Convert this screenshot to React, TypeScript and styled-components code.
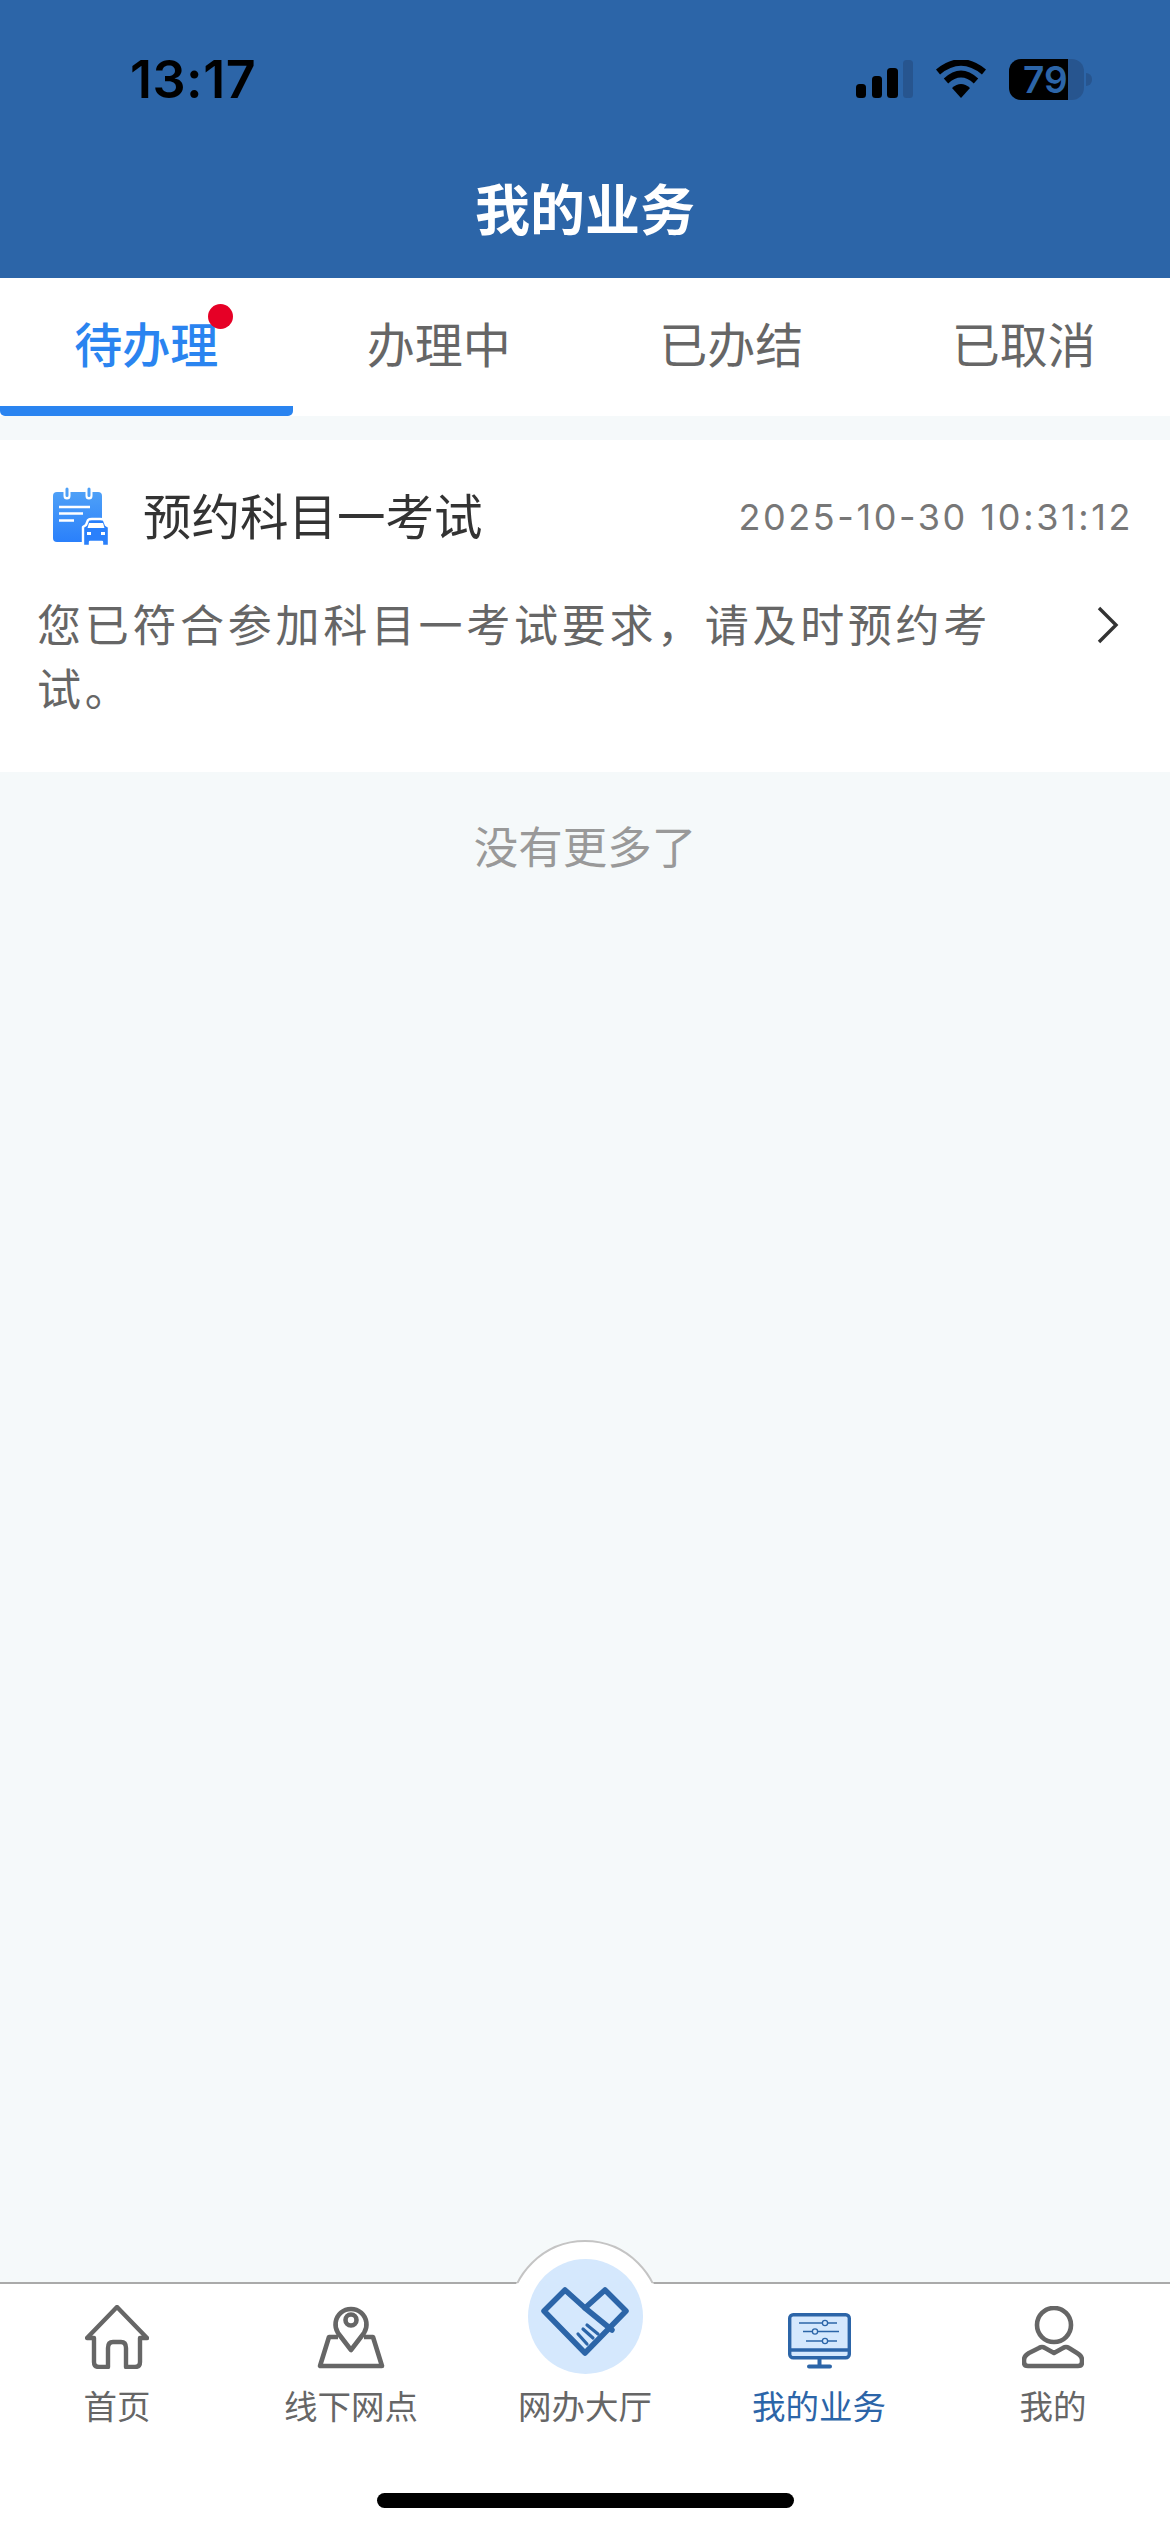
import React from 'react';
import styled, { createGlobalStyle } from 'styled-components';

const BLUE = '#2c65a8';
const CJK = '"Noto Sans CJK SC", "Noto Sans", sans-serif';

const GlobalStyle = createGlobalStyle`
	html, body {
		margin: 0;
		padding: 0;
		background: #f5f9fa;
		font-family: ${CJK};
	}
`;

const tabs = ['待办理', '办理中', '已办结', '已取消'];

const HomeIcon = () => (
	<svg width="64" height="64" viewBox="0 0 64 64" fill="none" stroke="#666" strokeWidth="4.4" strokeLinejoin="round">
		<path d="M32 2 L2 33 H9 V57 Q9 62 14 62 H23 V43 Q23 37 28 37 H36 Q41 37 41 43 V62 H50 Q55 62 55 57 V33 H62 Z" />
	</svg>
);

const PinIcon = () => (
	<svg width="68" height="66" viewBox="0 0 68 66" fill="none" stroke="#666" strokeWidth="4.6" strokeLinejoin="round">
		<path d="M21 34 H12 L3 63 H65 L56 34 H47" />
		<path d="M34 47 L21 30 A15.5 15.5 0 1 1 47 30 Z" />
		<circle cx="34" cy="17" r="5.5" />
	</svg>
);

const HandsIcon = () => (
	<svg width="90" height="80" viewBox="0 0 90 80" fill="none" stroke={BLUE} strokeWidth="5.5" strokeLinejoin="round" strokeLinecap="round">
		<path d="M4 35 L25 14 L45 32 L65 14 L86 35 L45 77 Z" />
		<path d="M45 32 L72 54" />
		<path d="M38 58 L47 68 M43 53 L53 62 M47 49 L58 58" strokeWidth="3.2" />
	</svg>
);

const MonitorIcon = () => (
	<svg width="63" height="56" viewBox="0 0 63 56">
		<rect x="1.7" y="1.7" width="59.6" height="43" rx="3.5" fill="#d5e8fd" stroke={BLUE} strokeWidth="3.4" />
		<path d="M2 37 H61" stroke={BLUE} strokeWidth="3.4" />
		<path d="M31.5 45 V53" stroke={BLUE} strokeWidth="4" />
		<path d="M21 53.5 H42" stroke={BLUE} strokeWidth="4" strokeLinecap="round" />
		<g stroke={BLUE} strokeWidth="1.3" fill="#d5e8fd">
			<path d="M11 10 H49 M15 18.5 H51 M18 28 H49" />
			<circle cx="37" cy="10" r="2.6" />
			<circle cx="27" cy="18.5" r="2.6" />
			<circle cx="37" cy="28" r="2.6" />
		</g>
	</svg>
);

const PersonIcon = () => (
	<svg width="62" height="63" viewBox="0 0 62 63" fill="none" stroke="#666" strokeWidth="4.6" strokeLinejoin="round">
		<ellipse cx="32" cy="19" rx="17" ry="17" />
		<path d="M6 60 H56 Q60 60 60 56 V54 Q60 50 55 47 L47 42 Q44 40 41 42 L32 47 L23 42 Q20 40 17 42 L7 47 Q2 50 2 54 V56 Q2 60 6 60 Z" />
	</svg>
);

const ExamIcon = () => (
	<svg width="58" height="60" viewBox="0 0 58 60">
		<defs>
			<linearGradient id="examFill" x1="0" y1="0" x2="0" y2="1">
				<stop offset="0" stopColor="#4ea0f7" />
				<stop offset="1" stopColor="#2a80fb" />
			</linearGradient>
		</defs>
		<rect x="1" y="5" width="49" height="50" rx="4" fill="url(#examFill)" />
		<path d="M15 3 V9 M37 3 V9" stroke="#fff" strokeWidth="7" strokeLinecap="round" />
		<path d="M15 2 V8.5 M37 2 V8.5" stroke="#4ea0f7" strokeWidth="3" strokeLinecap="round" />
		<path d="M7 20 H38 M7 26.5 H31 M7 33.5 H22" stroke="#fff" strokeWidth="2.4" />
		<path
			d="M36 33 Q37 32 40 32 H48 Q51 32 52 33 L54 38 L57 40 V59 H50 V55 H38 V59 H31 V40 L34 38 Z"
			fill="#2a80fb"
			stroke="#fff"
			strokeWidth="2.4"
			strokeLinejoin="round"
		/>
		<path d="M37 36 H51 L52.5 41 H35.5 Z" fill="#fff" />
		<rect x="35" y="45" width="4" height="3" fill="#fff" />
		<rect x="49" y="45" width="4" height="3" fill="#fff" />
	</svg>
);

const navItems = [
	{ label: '首页', icon: <HomeIcon /> },
	{ label: '线下网点', icon: <PinIcon /> },
	{
		label: '网办大厅',
		icon: (
			<RaisedDisc>
				<RaisedCircle>
					<HandsIcon />
				</RaisedCircle>
			</RaisedDisc>
		),
	},
	{ label: '我的业务', icon: <MonitorIcon />, active: true },
	{ label: '我的', icon: <PersonIcon /> },
];

function RaisedDisc({ children }: { children: React.ReactNode }) {
	return <DiscShape>{children}</DiscShape>;
}

function RaisedCircle({ children }: { children: React.ReactNode }) {
	return <CircleShape>{children}</CircleShape>;
}

const App: React.FC = () => {
	return (
		<Page>
			<GlobalStyle />
			<Header>
				<StatusBar>
					<Clock>13:17</Clock>
					<StatusIcons>
						<svg width="57" height="38" viewBox="0 0 57 38">
							<rect x="0" y="24" width="10" height="14" rx="3.5" fill="#000" />
							<rect x="16" y="16" width="10" height="22" rx="3.5" fill="#000" />
							<rect x="31" y="8" width="11" height="30" rx="3.5" fill="#000" />
							<rect x="47" y="0" width="10" height="38" rx="3.5" fill="#27558f" />
						</svg>
						<svg width="50" height="38" viewBox="0 0 50 38">
							<path d="M25 38 L16 28 Q25 20 34 28 Z" fill="#000" />
							<path d="M10 21 Q25 7 40 21" fill="none" stroke="#000" strokeWidth="6.5" />
							<path d="M2 12 Q25 -7 48 12" fill="none" stroke="#000" strokeWidth="6.5" />
						</svg>
						<Battery>79</Battery>
					</StatusIcons>
				</StatusBar>
				<Title>我的业务</Title>
			</Header>
			<TabBar>
				{tabs.map((tab, i) => (
					<Tab key={tab} $active={i === 0}>
						<TabLabel>
							{tab}
							{i === 0 && <RedDot />}
						</TabLabel>
					</Tab>
				))}
			</TabBar>
			<Card>
				<CardHead>
					<CardTitleWrap>
						<ExamIcon />
						<CardTitle>预约科目一考试</CardTitle>
					</CardTitleWrap>
					<CardTime>2025-10-30 10:31:12</CardTime>
				</CardHead>
				<CardBody>
					<CardText>您已符合参加科目一考试要求，请及时预约考试。</CardText>
					<Chevron width="24" height="38" viewBox="0 0 24 38" fill="none" stroke="#333" strokeWidth="3.4">
						<path d="M3 2 L20 19 L3 36" />
					</Chevron>
				</CardBody>
			</Card>
			<NoMore>没有更多了</NoMore>
			<Spacer />
			<NavBar>
				<NavRow>
					{navItems.map((item) => (
						<NavItem key={item.label} $active={item.active}>
							<NavIcon>{item.icon}</NavIcon>
							<NavLabel>{item.label}</NavLabel>
						</NavItem>
					))}
				</NavRow>
				<HomeIndicator />
			</NavBar>
		</Page>
	);
};

const Page = styled.div`
	width: 1170px;
	height: 2532px;
	display: flex;
	flex-direction: column;
	background: #f5f9fa;
	overflow: hidden;
`;

const Header = styled.header`
	height: 278px;
	background: ${BLUE};
	display: flex;
	flex-direction: column;
	box-sizing: border-box;
	padding-top: 50px;
`;

const StatusBar = styled.div`
	height: 58px;
	display: flex;
	align-items: center;
	justify-content: space-between;
	padding: 0 86px 0 130px;
`;

const Clock = styled.div`
	font-family: Inter, 'Liberation Sans', sans-serif;
	font-size: 52px;
	font-weight: 600;
	letter-spacing: 0.5px;
	color: #000;
`;

const StatusIcons = styled.div`
	display: flex;
	align-items: center;
	gap: 23px;
`;

const Battery = styled.div`
	position: relative;
	width: 75px;
	height: 41px;
	border-radius: 12px;
	background: linear-gradient(90deg, #000 78.5%, #27558f 78.5%);
	color: ${BLUE};
	font-family: Inter, 'Liberation Sans', sans-serif;
	font-size: 37px;
	font-weight: 600;
	line-height: 41px;
	padding-left: 14px;
	box-sizing: border-box;

	&::after {
		content: '';
		position: absolute;
		right: -8px;
		top: 14px;
		width: 6px;
		height: 13px;
		border-radius: 0 6px 6px 0;
		background: #27558f;
	}
`;

const Title = styled.h1`
	margin: 63px 0 0;
	text-align: center;
	color: #fff;
	font-size: 55px;
	font-weight: 700;
	line-height: 70px;
`;

const TabBar = styled.nav`
	height: 138px;
	background: #fff;
	display: grid;
	grid-template-columns: repeat(4, 1fr);
`;

const Tab = styled.div<{ $active?: boolean }>`
	display: flex;
	justify-content: center;
	padding-top: 29px;
	box-sizing: border-box;
	font-size: 48px;
	line-height: 70px;
	font-weight: ${(props) => (props.$active ? 500 : 400)};
	color: ${(props) => (props.$active ? '#2a84f0' : '#666')};
	border-bottom: 10px solid ${(props) => (props.$active ? '#2a84f0' : 'transparent')};
	border-radius: ${(props) => (props.$active ? '0 0 5px 5px' : '0')};
`;

const TabLabel = styled.span`
	position: relative;
	height: 70px;
`;

const RedDot = styled.i`
	position: absolute;
	right: -15px;
	top: -3px;
	width: 25px;
	height: 25px;
	border-radius: 50%;
	background: #e60026;
`;

const Card = styled.section`
	margin-top: 24px;
	height: 332px;
	background: #fff;
	box-sizing: border-box;
	padding-top: 46px;
`;

const CardHead = styled.div`
	display: flex;
	align-items: center;
	justify-content: space-between;
	padding: 0 37px 0 52px;
	height: 62px;
`;

const CardTitleWrap = styled.div`
	display: flex;
	align-items: center;
	gap: 33px;
`;

const CardTitle = styled.div`
	font-size: 48.5px;
	color: #333;
	line-height: 58px;
	margin-top: -6px;
`;

const CardTime = styled.div`
	font-family: Inter, 'Liberation Sans', sans-serif;
	font-size: 36px;
	letter-spacing: 2.6px;
	color: #777;
`;

const CardBody = styled.div`
	display: flex;
	justify-content: space-between;
	padding: 43px 50px 0 37px;
`;

const CardText = styled.p`
	margin: 0;
	width: 985px;
	font-size: 44px;
	letter-spacing: 3.7px;
	line-height: 64px;
	color: #666;
`;

const Chevron = styled.svg`
	margin-top: 15px;
	flex-shrink: 0;
`;

const NoMore = styled.div`
	margin-top: 41px;
	text-align: center;
	font-size: 44.5px;
	line-height: 64px;
	color: #999;
`;

const Spacer = styled.div`
	flex: 1;
`;

const NavBar = styled.footer`
	position: relative;
	height: 250px;
	background: #fff;
	border-top: 2px solid #aaa;
	box-sizing: border-box;
`;

const NavRow = styled.div`
	display: grid;
	grid-template-columns: repeat(5, 234px);
`;

const NavItem = styled.div<{ $active?: boolean }>`
	position: relative;
	display: flex;
	flex-direction: column;
	align-items: center;
	padding-top: 19px;
	color: ${(props) => (props.$active ? BLUE : '#666')};
`;

const NavIcon = styled.div`
	height: 66px;
	display: flex;
	align-items: flex-end;
`;

const NavLabel = styled.div`
	margin-top: 12px;
	font-size: 33.5px;
	line-height: 48px;
`;

const DiscShape = styled.div`
	position: absolute;
	top: -44px;
	left: 41px;
	width: 152px;
	height: 152px;
	border-radius: 50%;
	background: #fff;
	display: flex;
	align-items: center;
	justify-content: center;

	&::before {
		content: '';
		position: absolute;
		inset: 0;
		box-sizing: border-box;
		border-radius: 50%;
		border: 2px solid #c4c4c4;
		clip-path: inset(0 0 71.5% 0);
	}
`;

const CircleShape = styled.div`
	width: 115px;
	height: 115px;
	border-radius: 50%;
	background: #d5e8fd;
	display: flex;
	align-items: center;
	justify-content: center;
`;

const HomeIndicator = styled.div`
	position: absolute;
	left: 377px;
	top: 209px;
	width: 417px;
	height: 15px;
	border-radius: 8px;
	background: #000;
`;

export default App;
